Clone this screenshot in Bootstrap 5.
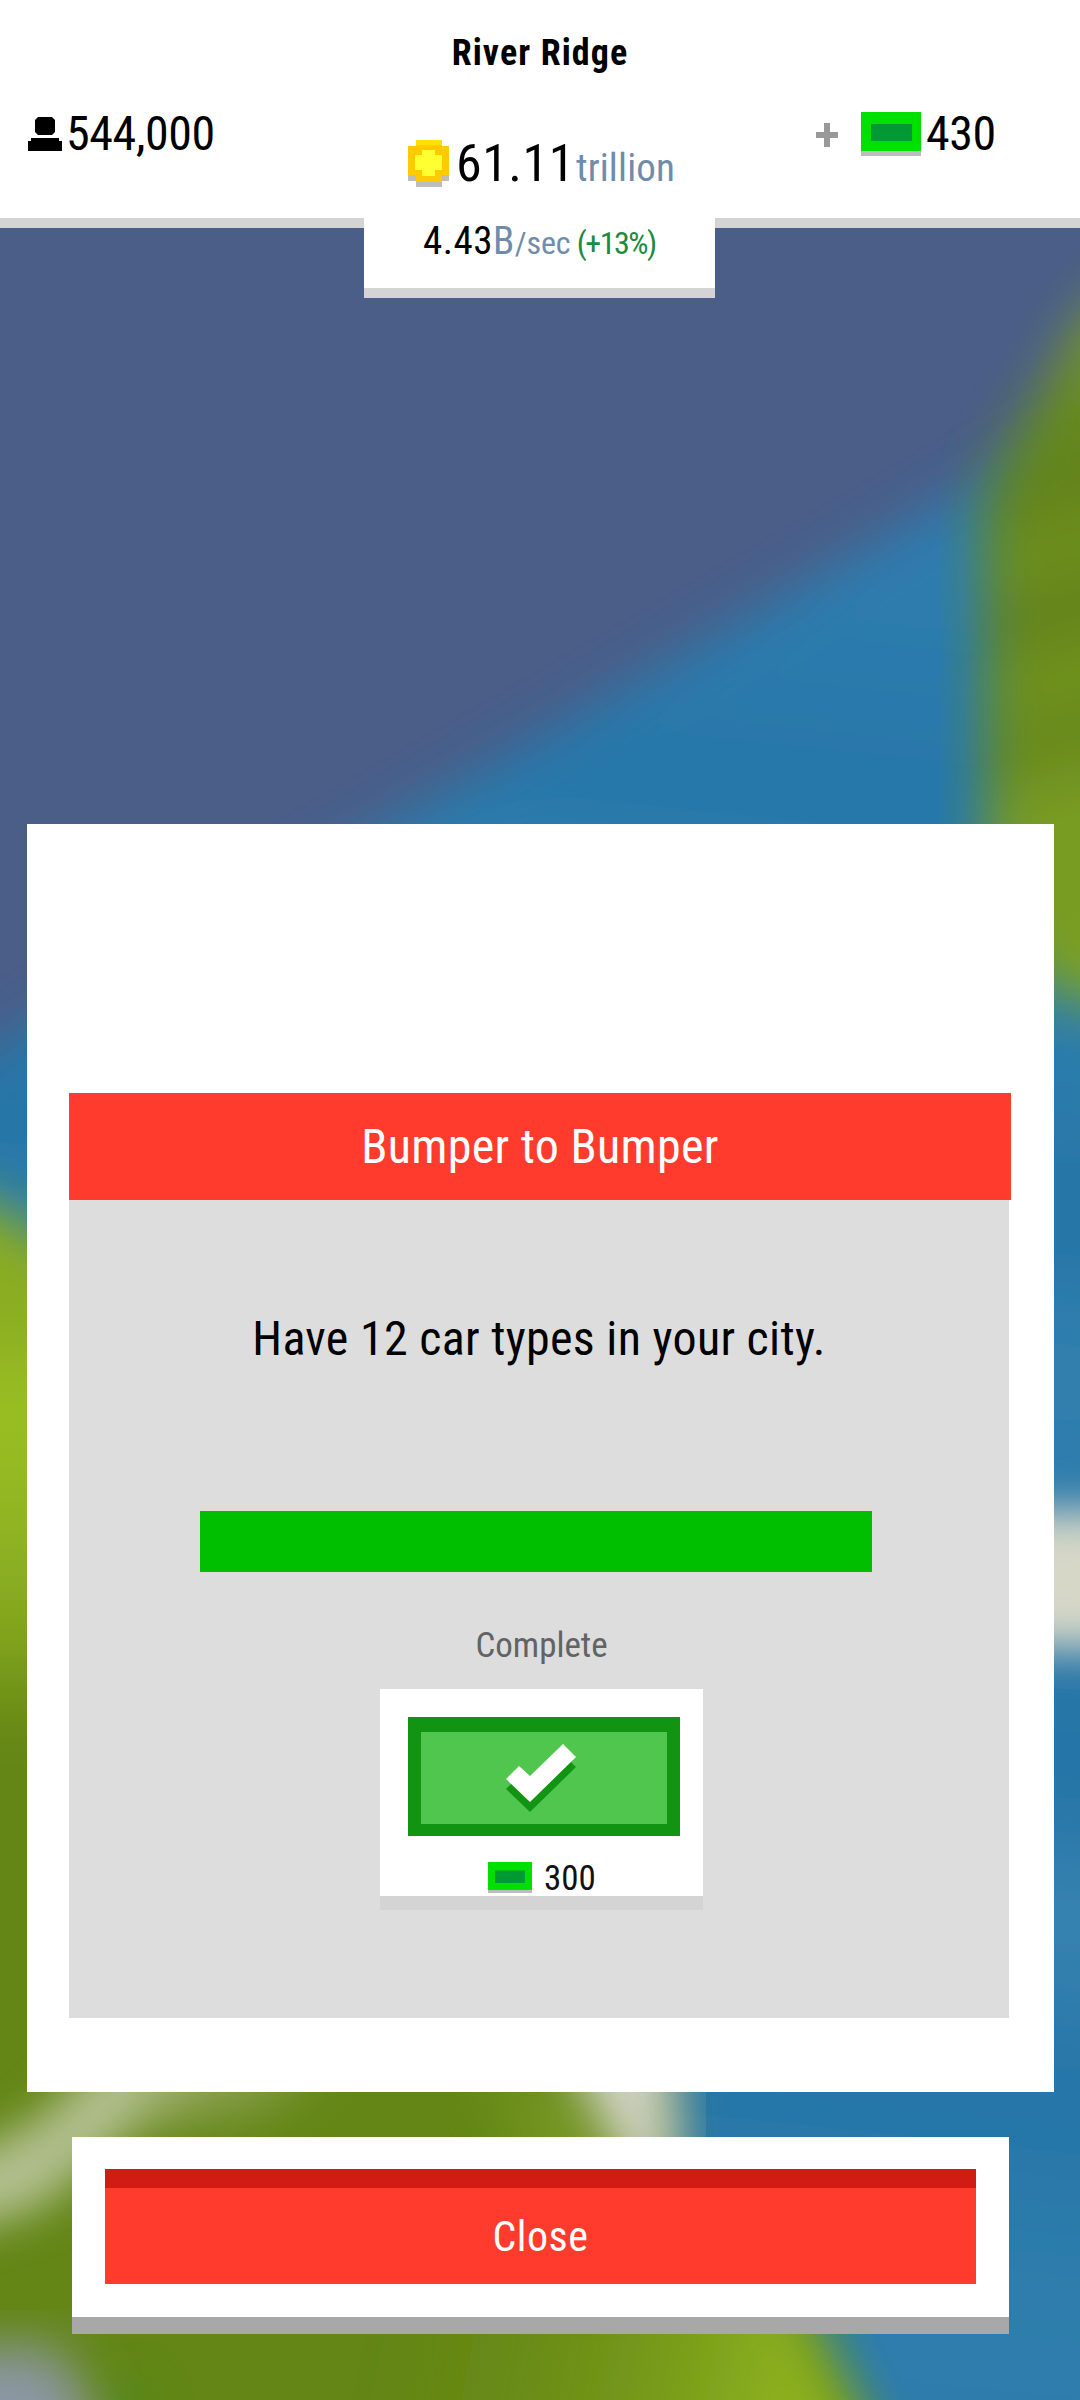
<!DOCTYPE html>
<html lang="en">
<head>
<meta charset="utf-8">
<meta name="viewport" content="width=device-width, initial-scale=1">
<title>River Ridge</title>
<link href="https://cdn.jsdelivr.net/npm/bootstrap@5.3.0/dist/css/bootstrap.min.css" rel="stylesheet">
<style>
  body { font-family: "Roboto Condensed", Roboto, "Liberation Sans", sans-serif; color: #000; width: 1080px; height: 2400px; background: #4a5e88; }
  .scene { inset: 0; width: 1080px; height: 2400px; z-index: -1; }
  .topbar { height: 228px; border-bottom: 10px solid #d4d4d4; padding-top: 32px; }
  .city { font-size: 36px; line-height: 42px; height: 46px; font-weight: 700; letter-spacing: 1.1px; }
  .side { width: 364px; padding-top: 28px; font-size: 48px; line-height: 56px; letter-spacing: -.4px; }
  .middle { width: 351px; height: 220px; padding-top: 56px; border-bottom: 10px solid #d4d4d4; }
  .coins { font-size: 52px; line-height: 60px; letter-spacing: .5px; padding-left: 44px; }
  .coins small { font-size: 39px; letter-spacing: .2px; margin-left: 1px; }
  .income { font-size: 39px; line-height: 44px; margin-top: 21px; padding-left: 59px; letter-spacing: .5px; }
  .income small { font-size: 32px; letter-spacing: -.2px; }
  .income .gain { letter-spacing: -1.5px; margin-left: -3px; }
  .unit { color: #6f8cad; }
  .gain { color: #1c8a3f; }
  .plus-sign { margin: 17px 23px 0 101px; }
  .dialog-box { width: 1027px; height: 1268px; margin: 596px 0 0 27px; padding: 269px 42px 0; }
  .quest-title { width: 942px; height: 107px; background: #ff3b2d; color: #fff; font-size: 48px; line-height: 56px; letter-spacing: .3px; }
  .quest-body { width: 940px; height: 818px; background: #ddd; padding-top: 111px; }
  .goal { font-size: 48px; line-height: 56px; letter-spacing: .3px; }
  .meter { width: 672px; height: 61px; margin: 144px 0 0 131px; }
  .meter .progress-bar { background: #00bf00; }
  .state { font-size: 35px; line-height: 40px; color: #636363; margin: 54px 0 0 5px; }
  .reward { width: 323px; height: 221px; margin: 23px 0 0 311px; padding: 28px 23px 0 28px; border-bottom: 14px solid #d4d4d4; }
  .claim { width: 272px; height: 119px; background: #51c64f; border: solid #119411; border-width: 15px 13px 12px; }
  .prize { font-size: 35px; line-height: 34px; margin-top: 26px; padding-left: 80px; color: #111; }
  .close-panel { width: 937px; height: 197px; margin: 45px 0 0 72px; padding: 32px 33px 0; border-bottom: 17px solid #a8a8a8; }
  .close-btn { height: 115px; background: #ff3b2d; border-top: 19px solid #d11c13; font-size: 42px; letter-spacing: .5px; }
</style>
</head>
<body class="position-relative overflow-hidden">

<svg class="scene position-absolute" viewBox="0 0 1080 2400" aria-hidden="true">
  <defs>
    <filter id="soft" x="-20%" y="-20%" width="140%" height="140%"><feGaussianBlur stdDeviation="26"/></filter>
    <filter id="wide" x="-60%" y="-60%" width="220%" height="220%"><feGaussianBlur stdDeviation="22"/></filter>
    <linearGradient id="meadow" gradientUnits="userSpaceOnUse" x1="0" y1="1200" x2="0" y2="1740">
      <stop offset="0" stop-color="#88ab20"/><stop offset=".22" stop-color="#8bad20"/><stop offset=".38" stop-color="#9abf23"/>
      <stop offset=".62" stop-color="#8fb322"/><stop offset=".8" stop-color="#82a41e"/><stop offset="1" stop-color="#648614"/>
    </linearGradient>
    <linearGradient id="shore" gradientUnits="userSpaceOnUse" x1="380" y1="2300" x2="780" y2="2380">
      <stop offset="0" stop-color="#648614" stop-opacity="0"/><stop offset="1" stop-color="#8cb01e"/>
    </linearGradient>
    <linearGradient id="hill" gradientUnits="userSpaceOnUse" x1="1000" y1="260" x2="1200" y2="1000">
      <stop offset="0" stop-color="#7c9c38"/><stop offset=".14" stop-color="#75962a"/><stop offset=".22" stop-color="#66881e"/>
      <stop offset=".31" stop-color="#62821c"/><stop offset=".39" stop-color="#6f9220"/><stop offset=".46" stop-color="#617f1b"/>
      <stop offset=".54" stop-color="#71941f"/><stop offset=".62" stop-color="#66871e"/><stop offset=".72" stop-color="#7a9d22"/>
      <stop offset=".82" stop-color="#779a22"/><stop offset="1" stop-color="#80a526"/>
    </linearGradient>
    <linearGradient id="lake" gradientUnits="userSpaceOnUse" x1="200" y1="500" x2="0" y2="2400">
      <stop offset="0" stop-color="#2e7cae"/><stop offset=".12" stop-color="#2777aa"/><stop offset=".2" stop-color="#2f7fac"/>
      <stop offset=".33" stop-color="#2675a7"/><stop offset=".4" stop-color="#3180ae"/><stop offset=".48" stop-color="#2d7bab"/>
      <stop offset=".62" stop-color="#2674a7"/><stop offset=".69" stop-color="#3783b0"/><stop offset=".78" stop-color="#2675a8"/>
      <stop offset=".9" stop-color="#2f7eac"/><stop offset="1" stop-color="#2c7aab"/>
    </linearGradient>
  </defs>
  <rect width="1080" height="2400" fill="#4a5e88"/>
  <path filter="url(#soft)" d="M-120 1112L378 830L965 490L1200 352V2520H-120Z" fill="url(#lake)"/>
  <path filter="url(#soft)" d="M1150 270L1086 310L1048 380L1008 445L982 500L984 640L984 780L986 900L1046 990L1190 1035V270Z" fill="url(#hill)"/>
  <path filter="url(#wide)" d="M1000 1512L1200 1508V1652L1000 1648Z" fill="#d6d7c7"/>
  <path filter="url(#soft)" d="M-120 1165L0 1208L300 1400L520 1900L665 2080L670 2170L805 2320L895 2500H-120Z" fill="url(#meadow)"/>
  <path filter="url(#soft)" d="M440 2230L760 2230L805 2320L895 2500H380Z" fill="url(#shore)"/>
  <path filter="url(#soft)" d="M530 1960L668 2010L676 2160L665 2230L630 2190L585 2100Z" fill="#d3d4c8"/>
  <path filter="url(#soft)" d="M480 2060L570 2100L640 2200L600 2300L540 2190Z" fill="#86a62a" opacity=".5"/>
  <path filter="url(#wide)" d="M-80 2180L40 2118L110 2050H230L120 2140L40 2208L-80 2245Z" fill="#b3c090"/>
  <path filter="url(#soft)" d="M150 2040H340L260 2112L140 2130Z" fill="#9bab68" opacity=".65"/>
  <path filter="url(#soft)" d="M-80 2350L55 2345L105 2430V2520H-80Z" fill="#8a97a4"/>
  <path filter="url(#wide)" d="M112 2385L140 2380L165 2460H120Z" fill="#3f8a1c" opacity=".6"/>
</svg>

<header class="topbar bg-white">
  <div class="city text-center">River Ridge</div>
  <div class="d-flex align-items-start">
    <div class="side d-flex" style="padding-left:28px">
      <svg width="34" height="34" viewBox="0 0 34 34" class="me-1 flex-shrink-0" style="margin-top:11px"><path d="M10 0H24L27 3V15L24 18H10L7 15V3ZM3 21H31V24H34V34H0V24H3Z"/></svg>
      <span>544,000</span>
    </div>
    <div class="middle bg-white">
      <div class="coins d-flex align-items-baseline">
        <svg width="41" height="47" viewBox="0 0 41 47" class="flex-shrink-0 align-self-start" style="margin:6px 7px 0 0">
          <path d="M0 35H41V41H34V47H8V41H0Z" fill="#bdbdbd"/>
          <path d="M8 0H34V6H41V35H34V42H8V35H0V6H8Z" fill="#ffca00"/>
          <path d="M8 0H34V5H8Z" fill="#ffe100"/>
          <path d="M14 10H27V15H34V30H27V36H14V30H7V15H14Z" fill="#ffff32"/>
        </svg>
        <span>61.11</span><small class="unit fw-normal">trillion</small>
      </div>
      <div class="income text-nowrap">4.43<span class="unit">B<small class="fw-normal">/sec</small></span> <small class="gain fw-normal">(+13%)</small></div>
    </div>
    <div class="side d-flex">
      <svg class="plus-sign flex-shrink-0" width="22" height="24" viewBox="0 0 22 24"><path d="M8 0H14V9H22V15H14V24H8V15H0V9H8Z" fill="#999"/></svg>
      <svg width="60" height="44" viewBox="0 0 60 44" class="flex-shrink-0" style="margin:6px 5px 0 0"><path d="M0 36H60V44H0Z" fill="#bdbdbd"/><path d="M0 0H60V39H0Z" fill="#00e000"/><path d="M10 12H51V29H10Z" fill="#009933"/></svg>
      <span>430</span>
    </div>
  </div>
</header>

<main>
  <section class="dialog-box bg-white">
    <h1 class="quest-title m-0 fw-normal d-flex align-items-center justify-content-center">Bumper to Bumper</h1>
    <div class="quest-body">
      <p class="goal text-center m-0">Have 12 car types in your city.</p>
      <div class="meter progress rounded-0 bg-transparent"><div class="progress-bar" role="progressbar" style="width:100%"></div></div>
      <div class="state text-center">Complete</div>
      <div class="reward bg-white">
        <button type="button" class="claim btn rounded-0 p-0 d-flex" aria-label="Claim reward">
          <svg width="70" height="68" viewBox="0 0 70 68" style="margin:12px 0 0 85px"><path d="M0 45L13 32L24 42L57 10L70 23L24 68Z" fill="#119411"/><path d="M0 35L13 22L24 32L57 0L70 13L24 58Z" fill="#fff"/></svg>
        </button>
        <div class="prize d-flex">
          <svg width="44" height="31" viewBox="0 0 44 31" class="flex-shrink-0" style="margin-right:12px"><path d="M0 26H44V31H0Z" fill="#bdbdbd"/><path d="M0 0H44V28H0Z" fill="#00e000"/><path d="M7 8.500H37V21H7Z" fill="#009933"/></svg>
          <span>300</span>
        </div>
      </div>
    </div>
  </section>
  <div class="close-panel bg-white">
    <button type="button" class="close-btn btn w-100 rounded-0 text-white border-start-0 border-end-0 border-bottom-0 p-0 d-flex align-items-center justify-content-center">Close</button>
  </div>
</main>

<script src="https://cdn.jsdelivr.net/npm/bootstrap@5.3.0/dist/js/bootstrap.bundle.min.js"></script>
</body>
</html>
